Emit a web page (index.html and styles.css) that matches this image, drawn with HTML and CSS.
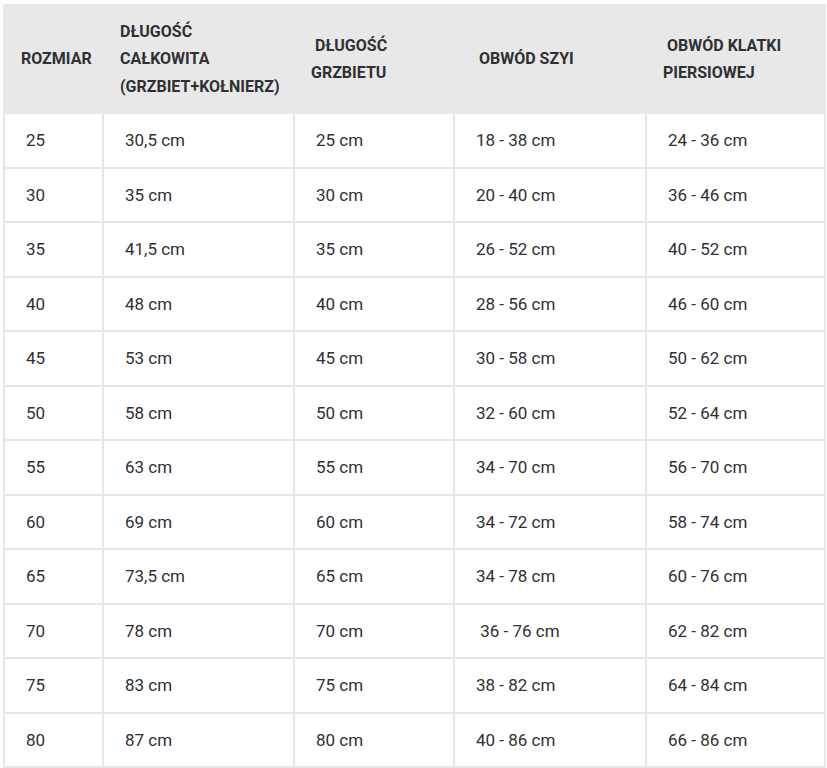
FILE: index.html
```html
<!DOCTYPE html>
<html lang="pl">
<head>
<meta charset="utf-8">
<title>Tabela rozmiarów</title>
<link rel="stylesheet" href="styles.css">
</head>
<body>
<div class="wrap">
<table class="sizes">
  <colgroup>
    <col class="c1"><col class="c2"><col class="c3"><col class="c4"><col class="c5">
  </colgroup>
  <thead>
    <tr>
      <th>ROZMIAR</th>
      <th>DŁUGOŚĆ<br>CAŁKOWITA<br>(GRZBIET+KOŁNIERZ)</th>
      <th>&nbsp;DŁUGOŚĆ<br>GRZBIETU</th>
      <th>&nbsp;&nbsp;OBWÓD SZYI</th>
      <th>&nbsp;OBWÓD KLATKI<br>PIERSIOWEJ</th>
    </tr>
  </thead>
  <tbody>
    <tr><td>25</td><td>30,5 cm</td><td>25 cm</td><td>18 - 38 cm</td><td>24 - 36 cm</td></tr>
    <tr><td>30</td><td>35 cm</td><td>30 cm</td><td>20 - 40 cm</td><td>36 - 46 cm</td></tr>
    <tr><td>35</td><td>41,5 cm</td><td>35 cm</td><td>26 - 52 cm</td><td>40 - 52 cm</td></tr>
    <tr><td>40</td><td>48 cm</td><td>40 cm</td><td>28 - 56 cm</td><td>46 - 60 cm</td></tr>
    <tr><td>45</td><td>53 cm</td><td>45 cm</td><td>30 - 58 cm</td><td>50 - 62 cm</td></tr>
    <tr><td>50</td><td>58 cm</td><td>50 cm</td><td>32 - 60 cm</td><td>52 - 64 cm</td></tr>
    <tr><td>55</td><td>63 cm</td><td>55 cm</td><td>34 - 70 cm</td><td>56 - 70 cm</td></tr>
    <tr><td>60</td><td>69 cm</td><td>60 cm</td><td>34 - 72 cm</td><td>58 - 74 cm</td></tr>
    <tr><td>65</td><td>73,5 cm</td><td>65 cm</td><td>34 - 78 cm</td><td>60 - 76 cm</td></tr>
    <tr><td>70</td><td>78 cm</td><td>70 cm</td><td>&nbsp;36 - 76 cm</td><td>62 - 82 cm</td></tr>
    <tr><td>75</td><td>83 cm</td><td>75 cm</td><td>38 - 82 cm</td><td>64 - 84 cm</td></tr>
    <tr><td>80</td><td>87 cm</td><td>80 cm</td><td>40 - 86 cm</td><td>66 - 86 cm</td></tr>
  </tbody>
</table>
</div>
</body>
</html>
```

FILE: styles.css
```css
html, body {
  margin: 0;
  padding: 0;
  background: #ffffff;
}

.wrap {
  padding: 4px 0 0 3px;
}

.sizes {
  border-collapse: collapse;
  table-layout: fixed;
  width: 821px;
  font-family: Roboto, "Liberation Sans", sans-serif;
  color: #2f3033;
}

.c1 { width: 99px; }
.c2 { width: 191px; }
.c3 { width: 160px; }
.c4 { width: 192px; }
.c5 { width: 179px; }

.sizes th {
  background: #e8e8e8;
  font-size: 16px;
  font-weight: 700;
  line-height: 27.5px;
  text-align: left;
  vertical-align: middle;
  padding: 0 0 0 16px;
  height: 108px;
  box-sizing: border-box;
  border: 2px solid #e8e8e8;
}

.sizes td {
  font-size: 17px;
  font-weight: 400;
  line-height: 24px;
  text-align: left;
  vertical-align: middle;
  padding: 0 0 0 21px;
  height: 54.5px;
  box-sizing: border-box;
  border: 2px solid #e6e6e6;
}
```
